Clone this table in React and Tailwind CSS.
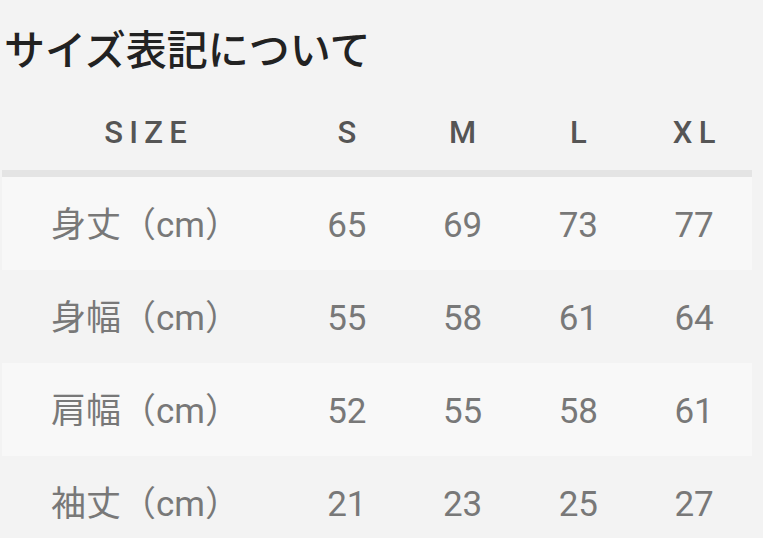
import React from "react";

const sizes = ["S", "M", "L", "XL"];

const rows = [
  { label: "身丈（cm）", values: [65, 69, 73, 77] },
  { label: "身幅（cm）", values: [55, 58, 61, 64] },
  { label: "肩幅（cm）", values: [52, 55, 58, 61] },
  { label: "袖丈（cm）", values: [21, 23, 25, 27] },
];

export default function App() {
  return (
    <div
      className="min-h-screen w-full bg-[#f3f3f3] overflow-hidden"
      style={{ fontFamily: 'Roboto, "Noto Sans CJK JP", sans-serif' }}
    >
      <h2 className="h-[92px] pl-[4px] pt-[28px] text-[41px] leading-[46px] font-medium text-[#222]">
        サイズ表記について
      </h2>

      <div className="ml-[2px] w-[750px]">
        {/* header */}
        <div className="grid grid-cols-[287px_1fr_1fr_1fr_1fr] h-[85px] pt-[4px] border-b-[7px] border-[#e4e4e4] items-center text-[31px] font-medium text-[#555] tracking-[0.2em]">
          <div className="text-center pl-[0.2em]">SIZE</div>
          {sizes.map((s) => (
            <div key={s} className="text-center pl-[0.2em]">
              {s}
            </div>
          ))}
        </div>

        {/* body */}
        {rows.map((row, i) => (
          <div
            key={row.label}
            className={`grid grid-cols-[287px_1fr_1fr_1fr_1fr] h-[93px] pt-[5px] items-center text-[35px] text-[#787878] ${
              i % 2 === 0 ? "bg-[#f8f8f8]" : "bg-[#f3f3f3]"
            }`}
          >
            <div className="text-center">{row.label}</div>
            {row.values.map((v, j) => (
              <div key={j} className="text-center">
                {v}
              </div>
            ))}
          </div>
        ))}
      </div>
    </div>
  );
}
